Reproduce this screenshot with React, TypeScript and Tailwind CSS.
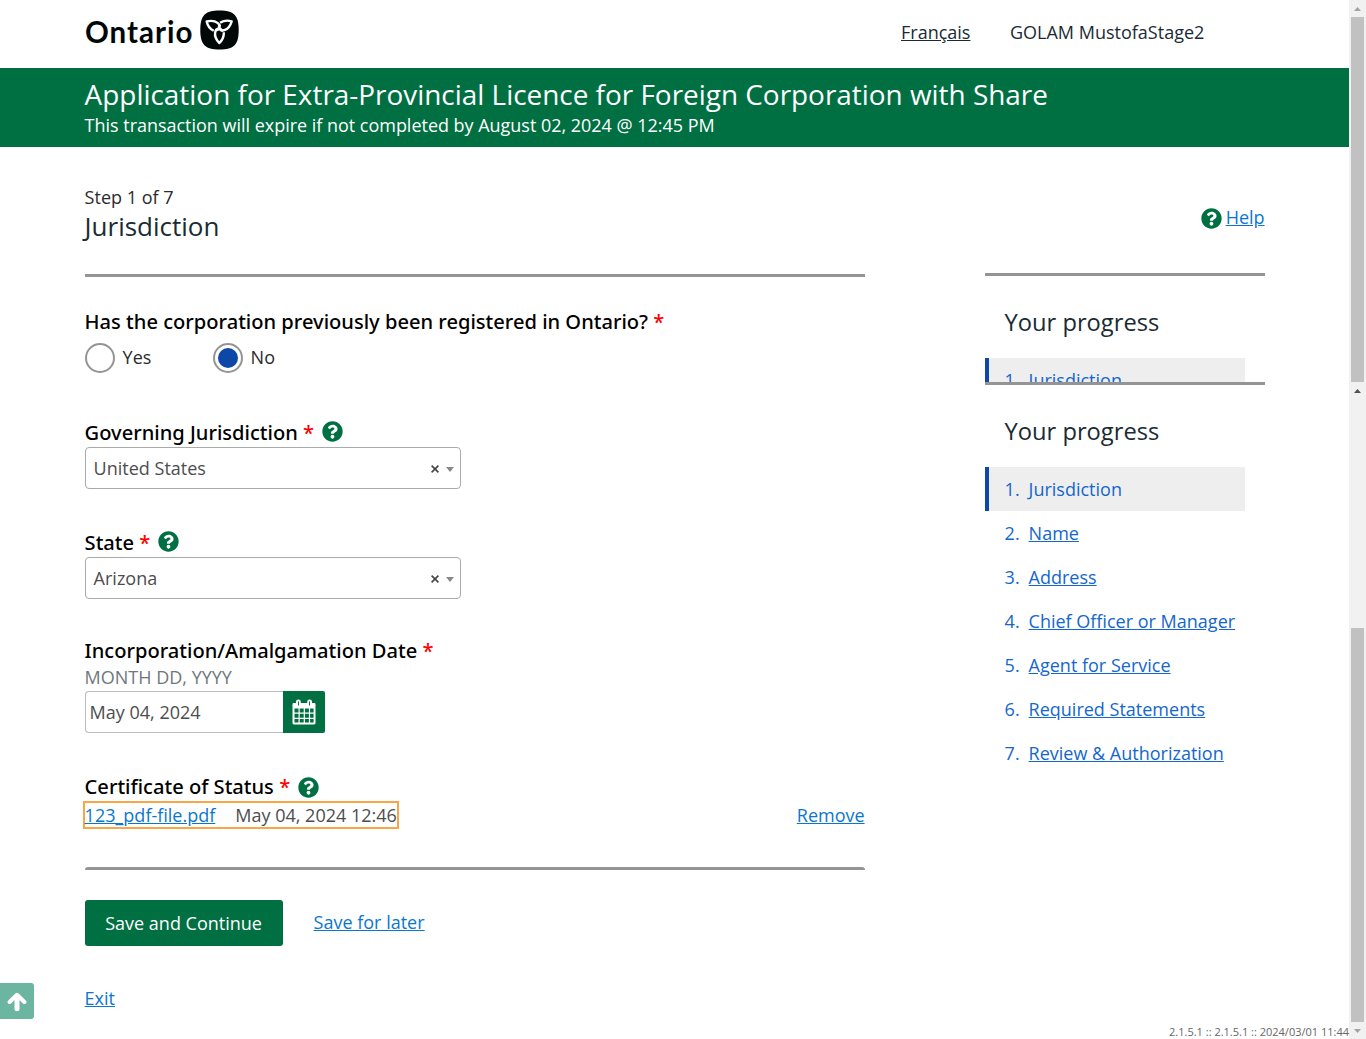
import type { ReactNode } from "react";

function HelpIcon() {
  return (
    <svg viewBox="0 0 512 512" className="size-[21px] shrink-0" fill="#006f42" aria-hidden="true">
      <path d="M504 256c0 137-111 248-248 248S8 393 8 256 119 8 256 8s248 111 248 248zM262.700 90c-54.500 0-89.300 23-116.500 63.800-3.500 5.300-2.400 12.400 2.700 16.300l34.700 26.300c5.200 3.900 12.600 3 16.700-2.100 17.900-22.700 30.100-35.800 57.300-35.800 20.400 0 45.700 13.100 45.700 33 0 15-12.400 22.700-32.500 34C247.100 238.500 216 254.900 216 296v4c0 6.600 5.400 12 12 12h56c6.600 0 12-5.400 12-12v-1.300c0-28.500 83.200-29.600 83.200-106.700 0-58-60.200-102-116.500-102zM256 338c-25.400 0-46 20.600-46 46s20.600 46 46 46 46-20.600 46-46-20.600-46-46-46z" />
    </svg>
  );
}

function Trillium() {
  const petal = "M13.700 20.800C9.700 18.600 7.500 15.500 6.700 11.400C10.500 10.500 15 10.900 17.500 12.900C19.700 14.600 20.200 16.800 19 18.600C18 20 16.400 20.200 15.200 19.400";
  return (
    <svg viewBox="0 0 39 40" className="h-10 w-[39px]" aria-hidden="true">
      <path d="M19.500 0.500C34 0.500 38.700 5.500 38.700 20S34 39.500 19.500 39.500S0.300 34.500 0.300 20S5 0.500 19.500 0.500Z" fill="#000807" />
      <g fill="none" stroke="#fff" strokeWidth="2.400" strokeLinejoin="round">
        <path d={petal} />
        <path d={petal} transform="rotate(120 19.200 18.600)" />
        <path d={petal} transform="rotate(240 19.200 18.600)" />
      </g>
    </svg>
  );
}

function CalendarIcon() {
  return (
    <svg viewBox="0 0 24 26" className="h-[26px] w-6" aria-hidden="true">
      <path fill="#fff" d="M1.700 4H4V2.800A2.400 2.400 0 0 1 8.800 2.800V4H15.200V2.800A2.400 2.400 0 0 1 20 2.800V4H22.300Q23.500 4 23.500 5.200V24Q23.500 25.400 22 25.400H2Q0.500 25.400 0.500 24V5.200Q0.500 4 1.700 4Z" />
      <path stroke="#006f42" strokeWidth="1" d="M6.500 2.500V6.500M17.500 2.500V6.500" />
      <path
        fill="#006f42"
        d="M2.500 9.500h4v4h-4zM7.700 9.500h4v4h-4zM12.900 9.500h4v4h-4zM18.100 9.500h3.500v4h-3.500zM2.500 14.700h4v4h-4zM7.700 14.700h4v4h-4zM12.900 14.700h4v4h-4zM18.100 14.700h3.500v4h-3.500zM2.500 19.900h4v3.500h-4zM7.700 19.900h4v3.500h-4zM12.900 19.900h4v3.500h-4zM18.100 19.900h3.500v3.500h-3.500z"
      />
    </svg>
  );
}

function Label({ children, help = false, low = false }: { children: ReactNode; help?: boolean; low?: boolean }) {
  return (
    <div className="flex h-7 items-center font-['Noto_Sans',sans-serif] text-[20.100px] leading-7 font-medium text-black">
      <span className="whitespace-pre">{children} <span className="text-[#f00]">*</span></span>
      {help && <span className={low ? "ml-2" : "ml-2 pb-[3px]"}><HelpIcon /></span>}
    </div>
  );
}

function Select({ value }: { value: string }) {
  return (
    <div className="flex h-[42px] w-[376px] items-center rounded-[4px] border border-[#aaa] pr-1.5 pl-2 text-[#4d4d4d]">
      <span className="flex-1">{value}</span>
      <svg viewBox="0 0 8 8" className="mt-px mr-[7px] size-2" stroke="#444" strokeWidth="1.600" aria-hidden="true">
        <path d="M0.600 0.600L7.400 7.400M7.400 0.600L0.600 7.400" />
      </svg>
      <svg viewBox="0 0 8 5" className="mt-0.5 h-[5px] w-2" fill="#888" aria-hidden="true">
        <path d="M0 0H8L4 5Z" />
      </svg>
    </div>
  );
}

const steps = [
  "Jurisdiction",
  "Name",
  "Address",
  "Chief Officer or Manager",
  "Agent for Service",
  "Required Statements",
  "Review & Authorization",
];

function Progress({ items }: { items: string[] }) {
  return (
    <nav className="w-[280px] border-t-3 border-[#949494]">
      <h2 className="mt-7 h-[54px] pl-5 text-[23.700px] leading-[37px] text-[#1a2b34]">Your progress</h2>
      <ol>
        {items.map((s, i) => (
          <li
            key={s}
            className={
              i === 0
                ? "flex h-11 w-[260px] items-center border-l-4 border-[#0d47a8] bg-[#eee] pl-4 text-[#1467cc]"
                : "flex h-11 w-[260px] items-center pl-5 text-[#1467cc]"
            }
          >
            <span className="w-6">{i + 1}.</span>
            <a className={i === 0 ? "whitespace-nowrap" : "whitespace-nowrap underline"}>{s}</a>
          </li>
        ))}
      </ol>
    </nav>
  );
}

function Arrow({ up = false, dark = false }: { up?: boolean; dark?: boolean }) {
  return (
    <svg viewBox="0 0 7 4" className={up ? "h-1 w-[7px]" : "h-1 w-[7px] rotate-180"} fill={dark ? "#505050" : "#a3a3a3"} aria-hidden="true">
      <path d="M0 4L3.500 0L7 4Z" />
    </svg>
  );
}

export default function App() {
  return (
    <div className="relative flex h-[1039px] w-[1366px] overflow-hidden bg-white font-['Open_Sans',sans-serif] text-[18px] leading-[26px] text-[#2b2b2b]">
      <div className="flex w-[1349px] flex-col">
        <header className="flex h-[68px] items-start pl-[85px]">
          <div className="flex w-[816px] gap-2 pt-2.5">
            <span className="w-[107px] pt-1 font-['Lato',sans-serif] text-[29.500px] leading-9 font-bold tracking-[1px] text-[#000807]">Ontario</span>
            <Trillium />
          </div>
          <a className="w-[109px] pt-[19px] text-[#1a2b34] underline">Français</a>
          <span className="pt-[19px] text-[#1a2b34]">GOLAM MustofaStage2</span>
        </header>

        <div className="h-[79px] bg-[#006f42] pt-2 pl-[84.600px] text-white">
          <h1 className="text-[27.920px] leading-[37px]">Application for Extra-Provincial Licence for Foreign Corporation with Share</h1>
          <p className="text-[17.970px] leading-[25px]">This transaction will expire if not completed by August 02, 2024 @ 12:45 PM</p>
        </div>

        <div className="flex pl-[84.600px]">
          <main className="w-[780px] pt-[37px]">
            <p className="leading-[27px]">Step 1 of 7</p>
            <h2 className="-mt-px text-[26px] leading-8 text-[#1a2b34]">Jurisdiction</h2>
            <hr className="mt-8 border-t-3 border-[#949494]" />

            <div className="mt-[31px]"><Label>Has the corporation previously been registered in Ontario?</Label></div>
            <div className="mt-[7px] flex h-[30px] items-center">
              <span className="size-[30px] rounded-full border-2 border-[#949494]" />
              <span className="w-[98px] pb-0.5 pl-2">Yes</span>
              <span className="flex size-[30px] items-center justify-center rounded-full border-2 border-[#949494]">
                <span className="size-5 rounded-full bg-[#0d47a8]" />
              </span>
              <span className="pb-0.5 pl-2">No</span>
            </div>

            <div className="mt-[46px]"><Label help>Governing Jurisdiction</Label></div>
            <Select value="United States" />
            <div className="mt-10"><Label help>State</Label></div>
            <Select value="Arizona" />

            <div className="mt-[38px]"><Label>Incorporation/Amalgamation Date</Label></div>
            <p className="-mt-px h-6 text-[#6f777b]">MONTH DD, YYYY</p>
            <div className="mt-[3px] flex h-[42px]">
              <span className="w-[198px] rounded-l-[4px] border border-r-0 border-[#bbb] pt-[7px] pl-1 text-[#4d4d4d]">May 04, 2024</span>
              <span className="flex w-[42px] items-center justify-center rounded-r-[2px] bg-[#006f42]"><CalendarIcon /></span>
            </div>

            <div className="mt-10"><Label help low>Certificate of Status</Label></div>
            <div className="flex justify-between">
              <div className="-ml-0.5 flex h-7 w-[316px] items-center gap-5 border-2 border-[#f9a646] whitespace-nowrap">
                <a className="text-[#0a77cf] underline">123_pdf-file.pdf</a>
                <span className="text-[#4d4d4d]">May 04, 2024 12:46</span>
              </div>
              <a className="pt-px text-[#0a77cf] underline">Remove</a>
            </div>
            <hr className="mt-[38px] h-[3px] rounded-t-[3px] border-0 bg-[#949494]" />

            <div className="mt-[30px] flex h-[46px] items-center gap-[31px]">
              <button className="h-[46px] w-[198px] rounded-[3px] bg-[#006f42] text-white">Save and Continue</button>
              <a className="pb-0.5 text-[#0a77cf] underline">Save for later</a>
            </div>
            <p className="mt-[39px]"><a className="text-[#0a77cf] underline">Exit</a></p>
          </main>

          <aside className="ml-[120px] w-[280px] pt-[58px]">
            <div className="flex h-[68px] items-start justify-end gap-1">
              <span className="pt-[3px]"><HelpIcon /></span>
              <a className="-mt-px text-[#0a77cf] underline">Help</a>
            </div>
            <div className="h-[109px] overflow-hidden"><Progress items={steps.slice(0, 1)} /></div>
            <Progress items={steps} />
          </aside>
        </div>
      </div>

      <div className="flex w-[17px] flex-col items-center bg-[#f1f1f1]">
        <div className="flex h-[17px] items-center"><Arrow up /></div>
        <div className="h-[365px] w-[13px] bg-[#c1c1c1]" />
        <div className="flex h-[17px] items-center"><Arrow up dark /></div>
        <div className="mt-[229px] h-[394px] w-[13px] bg-[#c1c1c1]" />
        <div className="flex h-[17px] items-center"><Arrow /></div>
      </div>

      <a className="absolute top-[983px] left-0 flex h-9 w-[34px] items-center justify-center rounded-r-[3px] bg-[#6cb5a0]">
        <svg viewBox="0 0 20 20" className="mt-0.5 size-5" fill="none" stroke="#fff" strokeLinecap="round" strokeLinejoin="round" aria-hidden="true">
          <path strokeWidth="4" d="M2.600 10L10 2.800L17.400 10" />
          <path strokeWidth="5" d="M10 5V16.700" />
        </svg>
      </a>
      <span className="absolute right-[17px] bottom-0 text-[11px] leading-[15px] text-[#666]">2.1.5.1 :: 2.1.5.1 :: 2024/03/01 11:44</span>
    </div>
  );
}
